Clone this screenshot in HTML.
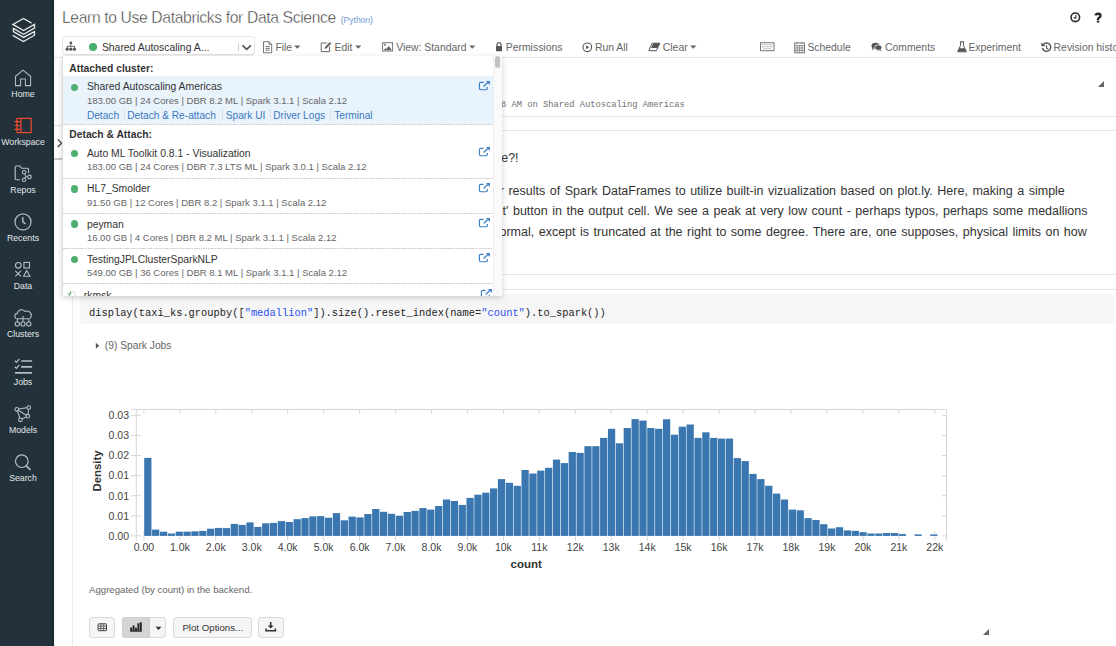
<!DOCTYPE html>
<html><head><meta charset="utf-8"><style>
html,body{margin:0;padding:0;}
body{width:1116px;height:646px;overflow:hidden;position:relative;background:#fff;font-family:'Liberation Sans', sans-serif;}
.t{position:absolute;white-space:nowrap;line-height:1;}
</style></head><body>
<div style="position:absolute;left:0.00px;top:0.00px;width:54.00px;height:646.00px;background:#22313a;"></div>
<div style="position:absolute;left:52.00px;top:0.00px;width:2.00px;height:646.00px;background:#1c2a32;"></div>
<div style="position:absolute;left:54.00px;top:0.00px;width:1.00px;height:646.00px;background:#f4f4f4;"></div>
<svg style="position:absolute;left:0;top:0" width="54" height="50"><path d="M31.5,23.1 L23.5,18.4 L12.9,24.4 L23.5,30.5 L34.5,24.4 L34.5,28 L23.5,34.3 L13.4,28.4 L13.4,31.6 L23.5,37.4 L34.5,31.6 L34.5,35.2 L23.5,41.5 L12.7,35.4" fill="none" stroke="#e8e8e8" stroke-width="1.3" stroke-linejoin="miter"/></svg>
<svg style="position:absolute;left:0;top:0" width="54" height="646"><path d="M15.5,85.6 V76.3 L23,70.2 L30.6,76.3 V85.6 H25.4 V78.9 H20.6 V85.6 Z" fill="none" stroke="#b5bec6" stroke-width="1.05"/><rect x="16.9" y="118.3" width="14.3" height="14.4" rx="0.6" fill="none" stroke="#e8492f" stroke-width="1.25"/><line x1="21" y1="118.3" x2="21" y2="132.7" stroke="#e8492f" stroke-width="1.2"/><path d="M14.5,121.7 H21 M14.5,125.5 H21 M14.5,129.3 H21" stroke="#e8492f" stroke-width="1.2"/><circle cx="17.2" cy="121.7" r="1.1" fill="#e8492f"/><circle cx="17.2" cy="125.5" r="1.1" fill="#e8492f"/><circle cx="17.2" cy="129.3" r="1.1" fill="#e8492f"/><path d="M19.9,179.7 H16.5 Q15.2,179.7 15.2,178.4 V167.3 Q15.2,166 16.5,166 H19.8 L21.6,168.2 H27.2 Q28.5,168.2 28.5,169.5 V173.1" fill="none" stroke="#b5bec6" stroke-width="1.15"/><circle cx="24.1" cy="172.3" r="1.75" fill="none" stroke="#b5bec6" stroke-width="1.1"/><circle cx="24.1" cy="179.8" r="1.75" fill="none" stroke="#b5bec6" stroke-width="1.1"/><circle cx="29.5" cy="176.9" r="1.75" fill="none" stroke="#b5bec6" stroke-width="1.1"/><path d="M24.7,173.9 L25.9,176.6 L24.8,178.2 M25.9,176.6 L27.8,176.8" fill="none" stroke="#b5bec6" stroke-width="1.1"/><circle cx="23" cy="221.9" r="8" fill="none" stroke="#b5bec6" stroke-width="1.2"/><path d="M22.8,217 V221.8 L25.6,224" fill="none" stroke="#b5bec6" stroke-width="1.4"/><circle cx="18.3" cy="265.3" r="2.8" fill="none" stroke="#b5bec6" stroke-width="1.1"/><rect x="23.9" y="262.4" width="5.6" height="5.6" fill="none" stroke="#b5bec6" stroke-width="1.1"/><path d="M15.3,270.8 L21,276.4 M21,270.8 L15.3,276.4 M26.7,270.6 L23.6,276.2 H29.9 Z" fill="none" stroke="#b5bec6" stroke-width="1.1"/><path d="M16.4,318.6 C14.3,318.2 13.9,314 17.3,313.4 C18,309.6 22.6,308.4 25,311.4 C28.2,310.2 32,312.6 31.2,316.2 C31,317.6 30.4,318.3 29.6,318.6" fill="none" stroke="#b5bec6" stroke-width="1.1"/><path d="M23,316 V321.6 M17.3,321.7 V318.8 H28.8 V321.7" fill="none" stroke="#b5bec6" stroke-width="1.1"/><circle cx="17.3" cy="323.9" r="2.1" fill="none" stroke="#b5bec6" stroke-width="1.1"/><circle cx="23" cy="323.9" r="2.1" fill="none" stroke="#b5bec6" stroke-width="1.1"/><circle cx="28.8" cy="323.9" r="2.1" fill="none" stroke="#b5bec6" stroke-width="1.1"/><path d="M14.8,360.8 L16.4,362.4 L19.4,358.9 M14.8,366.8 L16.4,368.4 L19.4,364.9" fill="none" stroke="#b5bec6" stroke-width="1.3"/><path d="M21.1,361 H32.1 M21.1,366.9 H32.1 M15,372.8 H32.1" fill="none" stroke="#b5bec6" stroke-width="1.7"/><path d="M16.8,409.3 L28.8,407.4 L27.8,416.2 L20.4,419.8 Z M16.8,409.3 L27.8,416.2" fill="none" stroke="#b5bec6" stroke-width="1.1"/><circle cx="16.8" cy="409.3" r="1.8" fill="#22313a" stroke="#b5bec6" stroke-width="1.1"/><circle cx="28.8" cy="407.5" r="1.8" fill="#22313a" stroke="#b5bec6" stroke-width="1.1"/><circle cx="27.8" cy="416.2" r="1.8" fill="#22313a" stroke="#b5bec6" stroke-width="1.1"/><circle cx="20.4" cy="419.8" r="1.8" fill="#22313a" stroke="#b5bec6" stroke-width="1.1"/><circle cx="21.8" cy="461.2" r="6.3" fill="none" stroke="#b5bec6" stroke-width="1.2"/><path d="M26.2,465.8 L30.5,469.8" stroke="#b5bec6" stroke-width="1.6"/></svg>
<div class="t" style="left:0;width:46px;text-align:center;top:89.89px;font-size:8.75px;color:#e4e7ea;">Home</div>
<div class="t" style="left:0;width:46px;text-align:center;top:137.89px;font-size:8.75px;color:#e4e7ea;">Workspace</div>
<div class="t" style="left:0;width:46px;text-align:center;top:185.89px;font-size:8.75px;color:#e4e7ea;">Repos</div>
<div class="t" style="left:0;width:46px;text-align:center;top:233.89px;font-size:8.75px;color:#e4e7ea;">Recents</div>
<div class="t" style="left:0;width:46px;text-align:center;top:281.89px;font-size:8.75px;color:#e4e7ea;">Data</div>
<div class="t" style="left:0;width:46px;text-align:center;top:329.89px;font-size:8.75px;color:#e4e7ea;">Clusters</div>
<div class="t" style="left:0;width:46px;text-align:center;top:377.89px;font-size:8.75px;color:#e4e7ea;">Jobs</div>
<div class="t" style="left:0;width:46px;text-align:center;top:425.89px;font-size:8.75px;color:#e4e7ea;">Models</div>
<div class="t" style="left:0;width:46px;text-align:center;top:473.89px;font-size:8.75px;color:#e4e7ea;">Search</div>
<svg style="position:absolute;left:54px;top:136px" width="10" height="14"><path d="M3.8,3.4 L7.6,7.2 L3.8,11" fill="none" stroke="#333" stroke-width="1.1"/></svg>
<div class="t" style="left:62.00px;top:10.21px;font-size:15.7px;color:#383838;font-weight:normal;font-family:'Liberation Sans', sans-serif;letter-spacing:-0.37px;-webkit-text-stroke:0.4px #fff;">Learn to Use Databricks for Data Science</div>
<div class="t" style="left:340.80px;top:15.82px;font-size:8.6px;color:#2c6cc0;font-weight:normal;font-family:'Liberation Sans', sans-serif;letter-spacing:-0.05px;-webkit-text-stroke:0.2px #fff;">(Python)</div>
<svg style="position:absolute;left:1068px;top:10px" width="40" height="16"><circle cx="7.3" cy="7.3" r="4.3" fill="none" stroke="#2a2a2a" stroke-width="1.6"/><path d="M7.9,4.9 V7.9 H5.6" fill="none" stroke="#2a2a2a" stroke-width="1.1"/></svg>
<svg style="position:absolute;left:1088px;top:8px" width="20" height="20"><path d="M7.5,7.4 C7.9,5.3 12.5,5 12.5,7.8 C12.5,9.6 10,9.8 10,11.6 V12.1" fill="none" stroke="#262626" stroke-width="2.3"/><rect x="8.8" y="12.6" width="2.5" height="1.9" fill="#262626"/></svg>
<div style="position:absolute;left:54.00px;top:56.90px;width:1062.00px;height:1.00px;background:#e6e6e6;"></div>
<div style="position:absolute;left:62.40px;top:36.20px;width:192.60px;height:19.20px;border:1px solid #e4e4e4;border-radius:4px;box-sizing:border-box;background:#fff;box-shadow:0 1px 1px rgba(0,0,0,0.06);"></div>
<svg style="position:absolute;left:62px;top:38px" width="20" height="16"><circle cx="8.85" cy="4.8" r="1.4" fill="#555"/><path d="M8.85,5 V8.3 M5.2,10.5 V8.3 H12.5 V10.5" fill="none" stroke="#555" stroke-width="0.9"/><circle cx="5.2" cy="11.2" r="1.6" fill="#555"/><circle cx="8.85" cy="11.2" r="1.6" fill="#555"/><circle cx="12.5" cy="11.2" r="1.6" fill="#555"/></svg>
<div style="position:absolute;left:89.20px;top:43.30px;width:7.80px;height:7.80px;border-radius:50%;background:#48ae6c;"></div>
<div class="t" style="left:101.90px;top:43.00px;font-size:10.4px;color:#333;font-weight:normal;font-family:'Liberation Sans', sans-serif;">Shared Autoscaling A...</div>
<div style="position:absolute;left:238.20px;top:43.30px;width:0.80px;height:7.40px;background:#d0d0d0;"></div>
<svg style="position:absolute;left:240px;top:42px" width="14" height="10"><path d="M2.4,3.3 L6.65,7.4 L10.9,3.3" fill="none" stroke="#555" stroke-width="1.75"/></svg>
<svg style="position:absolute;left:262px;top:41px" width="12" height="13"><path d="M1.5,0.7 H7 L9.7,3.4 V11.8 H1.5 Z M7,0.7 V3.4 H9.7 M3.3,5.6 H7.8 M3.3,7.4 H7.8 M3.3,9.2 H7.8" fill="none" stroke="#666" stroke-width="0.9"/></svg>
<div class="t" style="left:275.40px;top:42.60px;font-size:10.4px;color:#666;font-weight:normal;font-family:'Liberation Sans', sans-serif;">File</div>
<svg style="position:absolute;left:293.80px;top:44.5px" width="8" height="5"><path d="M0.2,0.4 H6.4 L3.3,3.8 Z" fill="#666"/></svg>
<svg style="position:absolute;left:320px;top:41px" width="13" height="12"><path d="M7,2 H1.2 V10.6 H9.6 V5.5" fill="none" stroke="#666" stroke-width="1"/><path d="M4.5,7.8 L5,5.9 L9.8,1.1 L11.3,2.6 L6.5,7.4 Z" fill="#666"/></svg>
<div class="t" style="left:334.50px;top:42.60px;font-size:10.4px;color:#666;font-weight:normal;font-family:'Liberation Sans', sans-serif;">Edit</div>
<svg style="position:absolute;left:355.30px;top:44.5px" width="8" height="5"><path d="M0.2,0.4 H6.4 L3.3,3.8 Z" fill="#666"/></svg>
<svg style="position:absolute;left:382px;top:42px" width="12" height="11"><rect x="0.6" y="0.7" width="10" height="8.3" fill="none" stroke="#777" stroke-width="1"/><path d="M1.6,8.3 L3.4,6.2 L4.4,7 L6.6,4 L8.8,6.6 L9.6,8.3 Z" fill="#666"/><circle cx="3" cy="2.7" r="0.95" fill="#666"/></svg>
<div class="t" style="left:396.20px;top:42.60px;font-size:10.4px;color:#666;font-weight:normal;font-family:'Liberation Sans', sans-serif;">View: Standard</div>
<svg style="position:absolute;left:469.30px;top:44.5px" width="8" height="5"><path d="M0.2,0.4 H6.4 L3.3,3.8 Z" fill="#666"/></svg>
<svg style="position:absolute;left:495px;top:41px" width="9" height="11"><path d="M2,5 V3.5 C2,1 6,1 6,3.5 V5" fill="none" stroke="#555" stroke-width="1.2"/><rect x="1" y="5" width="6" height="5.2" rx="0.5" fill="#555"/></svg>
<div class="t" style="left:505.80px;top:42.60px;font-size:10.4px;color:#666;font-weight:normal;font-family:'Liberation Sans', sans-serif;">Permissions</div>
<svg style="position:absolute;left:582px;top:42px" width="11" height="11"><circle cx="5.3" cy="5.3" r="4.3" fill="none" stroke="#555" stroke-width="1.1"/><path d="M4.1,3.3 L7.2,5.3 L4.1,7.3 Z" fill="#555"/></svg>
<div class="t" style="left:595.00px;top:42.60px;font-size:10.4px;color:#666;font-weight:normal;font-family:'Liberation Sans', sans-serif;">Run All</div>
<svg style="position:absolute;left:648px;top:42px" width="13" height="10"><path d="M0.7,8.7 L4.2,1.2 H11.8 L8.3,8.7 Z" fill="none" stroke="#555" stroke-width="1"/><path d="M5.4,1.2 H11.8 L9.5,6 H3.1 Z" fill="#555"/></svg>
<div class="t" style="left:662.80px;top:42.60px;font-size:10.4px;color:#666;font-weight:normal;font-family:'Liberation Sans', sans-serif;">Clear</div>
<svg style="position:absolute;left:689.80px;top:44.5px" width="8" height="5"><path d="M0.2,0.4 H6.4 L3.3,3.8 Z" fill="#666"/></svg>
<svg style="position:absolute;left:760px;top:42px" width="15" height="10"><rect x="0.5" y="0.7" width="13.5" height="8" fill="none" stroke="#777" stroke-width="1"/><path d="M2,2.7 H12.5 M2,4.7 H12.5 M3.5,6.7 H11" stroke="#999" stroke-width="0.9" stroke-dasharray="1,0.6"/></svg>
<svg style="position:absolute;left:794px;top:41px" width="12" height="13"><rect x="0.7" y="2" width="9.8" height="9.8" fill="none" stroke="#777" stroke-width="1"/><path d="M0.7,4.6 H10.5 M3,0.6 V3 M8,0.6 V3 M3.2,4.6 V11.8 M5.6,4.6 V11.8 M8,4.6 V11.8 M0.7,7 H10.5 M0.7,9.4 H10.5" stroke="#777" stroke-width="0.8"/></svg>
<div class="t" style="left:807.40px;top:42.60px;font-size:10.4px;color:#666;font-weight:normal;font-family:'Liberation Sans', sans-serif;">Schedule</div>
<svg style="position:absolute;left:871px;top:42px" width="12" height="10"><ellipse cx="4.5" cy="3.8" rx="4" ry="3" fill="#555"/><path d="M1.5,6 L0.8,8.3 L3.5,6.5 Z" fill="#555"/><ellipse cx="7.3" cy="5.6" rx="3.6" ry="2.8" fill="#555" stroke="#fff" stroke-width="0.8"/><path d="M9.5,7.5 L10.8,9.3 L7.8,8 Z" fill="#555"/></svg>
<div class="t" style="left:885.00px;top:42.60px;font-size:10.4px;color:#666;font-weight:normal;font-family:'Liberation Sans', sans-serif;">Comments</div>
<svg style="position:absolute;left:957px;top:41px" width="10" height="12"><path d="M3,0.8 H7 M3.6,0.8 V4.3 L0.6,10.8 H9.4 L6.4,4.3 V0.8" fill="none" stroke="#555" stroke-width="1"/><path d="M2.3,7.2 H7.7 L9.2,10.6 H0.8 Z" fill="#555"/></svg>
<div class="t" style="left:968.40px;top:42.60px;font-size:10.4px;color:#666;font-weight:normal;font-family:'Liberation Sans', sans-serif;">Experiment</div>
<svg style="position:absolute;left:1041px;top:42px" width="12" height="11"><path d="M2.2,2.6 A4.2,4.2 0 1 1 1.4,6" fill="none" stroke="#555" stroke-width="1.4"/><path d="M0.2,0.6 L0.6,4.6 L4.5,3.8 Z" fill="#555"/><path d="M5.5,3.2 V5.9 L7.4,7.2" fill="none" stroke="#555" stroke-width="1.1"/></svg>
<div class="t" style="left:1053.60px;top:42.60px;font-size:10.4px;color:#666;font-weight:normal;font-family:'Liberation Sans', sans-serif;">Revision history</div>
<div style="position:absolute;left:72.30px;top:57.00px;width:1.00px;height:589.00px;background:#eaecec;"></div>
<div style="position:absolute;left:73.00px;top:116.00px;width:1043.00px;height:1.00px;background:#e5e5e5;"></div>
<div style="position:absolute;left:73.00px;top:130.00px;width:1043.00px;height:1.00px;background:#e5e5e5;"></div>
<div style="position:absolute;left:54.00px;top:124.60px;width:9.00px;height:1.00px;background:#e0e0e0;"></div>
<div style="position:absolute;left:54.00px;top:158.10px;width:9.00px;height:1.80px;background:#c9c9c9;"></div>
<div class="t" style="left:196.44px;top:100.69px;font-size:8.76px;color:#707070;font-weight:normal;font-family:'Liberation Mono', monospace;white-space:pre;"> Command took 1.23 minutes -- by user at 6/1/2021, 10:15:18 AM on Shared Autoscaling Americas</div>
<svg style="position:absolute;left:1097px;top:80px" width="8" height="8"><path d="M1,7 L7,1 V7 Z" fill="#666"/></svg>
<div class="t" style="left:501.30px;top:152.10px;font-size:12.4px;color:#333;font-weight:normal;font-family:'Liberation Sans', sans-serif;">e?!</div>
<div class="t" style="left:499.75px;top:184.72px;font-size:12.5px;color:#333;font-weight:normal;font-family:'Liberation Sans', sans-serif;word-spacing:1.05px;">r results of Spark DataFrames to utilize built-in vizualization based on plot.ly. Here, making a simple</div>
<div class="t" style="left:502.55px;top:205.32px;font-size:12.5px;color:#333;font-weight:normal;font-family:'Liberation Sans', sans-serif;word-spacing:1.05px;">t' button in the output cell. We see a peak at very low count - perhaps typos, perhaps some medallions</div>
<div class="t" style="left:499.45px;top:225.52px;font-size:12.5px;color:#333;font-weight:normal;font-family:'Liberation Sans', sans-serif;word-spacing:1.05px;">ormal, except is truncated at the right to some degree. There are, one supposes, physical limits on how</div>
<div style="position:absolute;left:73.00px;top:274.00px;width:1043.00px;height:1.00px;background:#e5e5e5;"></div>
<div style="position:absolute;left:73.00px;top:288.50px;width:1043.00px;height:1.00px;background:#e5e5e5;"></div>
<div style="position:absolute;left:79.70px;top:294.40px;width:1034.70px;height:30.00px;background:#f6f6f6;border-radius:2px;"></div>
<div class="t" style="left:89.00px;top:308.14px;font-size:10.38px;color:#222;font-weight:normal;font-family:'Liberation Mono', monospace;white-space:pre;">display(taxi_ks.groupby([<span style="color:#2c50f5">"medallion"</span>]).size().reset_index(name=<span style="color:#2c50f5">"count"</span>).to_spark())</div>
<svg style="position:absolute;left:95px;top:342px" width="6" height="8"><path d="M0.8,0.7 L4.2,3.7 L0.8,6.7 Z" fill="#555"/></svg>
<div class="t" style="left:104.80px;top:341.31px;font-size:10.26px;color:#666;font-weight:normal;font-family:'Liberation Sans', sans-serif;">(9) Spark Jobs</div>
<div class="t" style="left:90px;width:39px;text-align:right;top:410.21px;font-size:10.5px;color:#444;">0.03</div>
<div class="t" style="left:90px;width:39px;text-align:right;top:430.29px;font-size:10.5px;color:#444;">0.03</div>
<div class="t" style="left:90px;width:39px;text-align:right;top:450.37px;font-size:10.5px;color:#444;">0.02</div>
<div class="t" style="left:90px;width:39px;text-align:right;top:470.45px;font-size:10.5px;color:#444;">0.01</div>
<div class="t" style="left:90px;width:39px;text-align:right;top:490.53px;font-size:10.5px;color:#444;">0.01</div>
<div class="t" style="left:90px;width:39px;text-align:right;top:510.61px;font-size:10.5px;color:#444;">0.01</div>
<div class="t" style="left:90px;width:39px;text-align:right;top:530.69px;font-size:10.5px;color:#444;">0.00</div>
<div class="t" style="left:118.90px;width:50px;text-align:center;top:541.91px;font-size:10.5px;color:#444;">0.00</div>
<div class="t" style="left:154.85px;width:50px;text-align:center;top:541.91px;font-size:10.5px;color:#444;">1.0k</div>
<div class="t" style="left:190.80px;width:50px;text-align:center;top:541.91px;font-size:10.5px;color:#444;">2.0k</div>
<div class="t" style="left:226.75px;width:50px;text-align:center;top:541.91px;font-size:10.5px;color:#444;">3.0k</div>
<div class="t" style="left:262.70px;width:50px;text-align:center;top:541.91px;font-size:10.5px;color:#444;">4.0k</div>
<div class="t" style="left:298.65px;width:50px;text-align:center;top:541.91px;font-size:10.5px;color:#444;">5.0k</div>
<div class="t" style="left:334.60px;width:50px;text-align:center;top:541.91px;font-size:10.5px;color:#444;">6.0k</div>
<div class="t" style="left:370.55px;width:50px;text-align:center;top:541.91px;font-size:10.5px;color:#444;">7.0k</div>
<div class="t" style="left:406.50px;width:50px;text-align:center;top:541.91px;font-size:10.5px;color:#444;">8.0k</div>
<div class="t" style="left:442.45px;width:50px;text-align:center;top:541.91px;font-size:10.5px;color:#444;">9.0k</div>
<div class="t" style="left:478.40px;width:50px;text-align:center;top:541.91px;font-size:10.5px;color:#444;">10k</div>
<div class="t" style="left:514.35px;width:50px;text-align:center;top:541.91px;font-size:10.5px;color:#444;">11k</div>
<div class="t" style="left:550.30px;width:50px;text-align:center;top:541.91px;font-size:10.5px;color:#444;">12k</div>
<div class="t" style="left:586.25px;width:50px;text-align:center;top:541.91px;font-size:10.5px;color:#444;">13k</div>
<div class="t" style="left:622.20px;width:50px;text-align:center;top:541.91px;font-size:10.5px;color:#444;">14k</div>
<div class="t" style="left:658.15px;width:50px;text-align:center;top:541.91px;font-size:10.5px;color:#444;">15k</div>
<div class="t" style="left:694.10px;width:50px;text-align:center;top:541.91px;font-size:10.5px;color:#444;">16k</div>
<div class="t" style="left:730.05px;width:50px;text-align:center;top:541.91px;font-size:10.5px;color:#444;">17k</div>
<div class="t" style="left:766.00px;width:50px;text-align:center;top:541.91px;font-size:10.5px;color:#444;">18k</div>
<div class="t" style="left:801.95px;width:50px;text-align:center;top:541.91px;font-size:10.5px;color:#444;">19k</div>
<div class="t" style="left:837.90px;width:50px;text-align:center;top:541.91px;font-size:10.5px;color:#444;">20k</div>
<div class="t" style="left:873.85px;width:50px;text-align:center;top:541.91px;font-size:10.5px;color:#444;">21k</div>
<div class="t" style="left:909.80px;width:50px;text-align:center;top:541.91px;font-size:10.5px;color:#444;">22k</div>
<svg style="position:absolute;left:0;top:0" width="1116" height="646"><path d="M131,409.4 H946.4 V540.5 M136.3,409.4 V540.8" fill="none" stroke="#d6d6d6" stroke-width="1"/><path d="M131.2,415.40 H140.8 M942,415.40 H946.4" stroke="#d6d6d6" stroke-width="1"/><path d="M131.2,435.48 H140.8 M942,435.48 H946.4" stroke="#d6d6d6" stroke-width="1"/><path d="M131.2,455.56 H140.8 M942,455.56 H946.4" stroke="#d6d6d6" stroke-width="1"/><path d="M131.2,475.64 H140.8 M942,475.64 H946.4" stroke="#d6d6d6" stroke-width="1"/><path d="M131.2,495.72 H140.8 M942,495.72 H946.4" stroke="#d6d6d6" stroke-width="1"/><path d="M131.2,515.80 H140.8 M942,515.80 H946.4" stroke="#d6d6d6" stroke-width="1"/><path d="M131.2,535.88 H140.8 M942,535.88 H946.4" stroke="#d6d6d6" stroke-width="1"/><path d="M143.90,409.4 V413.6 M143.90,531.5 V540.8" stroke="#d6d6d6" stroke-width="1"/><path d="M179.85,409.4 V413.6 M179.85,531.5 V540.8" stroke="#d6d6d6" stroke-width="1"/><path d="M215.80,409.4 V413.6 M215.80,531.5 V540.8" stroke="#d6d6d6" stroke-width="1"/><path d="M251.75,409.4 V413.6 M251.75,531.5 V540.8" stroke="#d6d6d6" stroke-width="1"/><path d="M287.70,409.4 V413.6 M287.70,531.5 V540.8" stroke="#d6d6d6" stroke-width="1"/><path d="M323.65,409.4 V413.6 M323.65,531.5 V540.8" stroke="#d6d6d6" stroke-width="1"/><path d="M359.60,409.4 V413.6 M359.60,531.5 V540.8" stroke="#d6d6d6" stroke-width="1"/><path d="M395.55,409.4 V413.6 M395.55,531.5 V540.8" stroke="#d6d6d6" stroke-width="1"/><path d="M431.50,409.4 V413.6 M431.50,531.5 V540.8" stroke="#d6d6d6" stroke-width="1"/><path d="M467.45,409.4 V413.6 M467.45,531.5 V540.8" stroke="#d6d6d6" stroke-width="1"/><path d="M503.40,409.4 V413.6 M503.40,531.5 V540.8" stroke="#d6d6d6" stroke-width="1"/><path d="M539.35,409.4 V413.6 M539.35,531.5 V540.8" stroke="#d6d6d6" stroke-width="1"/><path d="M575.30,409.4 V413.6 M575.30,531.5 V540.8" stroke="#d6d6d6" stroke-width="1"/><path d="M611.25,409.4 V413.6 M611.25,531.5 V540.8" stroke="#d6d6d6" stroke-width="1"/><path d="M647.20,409.4 V413.6 M647.20,531.5 V540.8" stroke="#d6d6d6" stroke-width="1"/><path d="M683.15,409.4 V413.6 M683.15,531.5 V540.8" stroke="#d6d6d6" stroke-width="1"/><path d="M719.10,409.4 V413.6 M719.10,531.5 V540.8" stroke="#d6d6d6" stroke-width="1"/><path d="M755.05,409.4 V413.6 M755.05,531.5 V540.8" stroke="#d6d6d6" stroke-width="1"/><path d="M791.00,409.4 V413.6 M791.00,531.5 V540.8" stroke="#d6d6d6" stroke-width="1"/><path d="M826.95,409.4 V413.6 M826.95,531.5 V540.8" stroke="#d6d6d6" stroke-width="1"/><path d="M862.90,409.4 V413.6 M862.90,531.5 V540.8" stroke="#d6d6d6" stroke-width="1"/><path d="M898.85,409.4 V413.6 M898.85,531.5 V540.8" stroke="#d6d6d6" stroke-width="1"/><path d="M934.80,409.4 V413.6 M934.80,531.5 V540.8" stroke="#d6d6d6" stroke-width="1"/><rect x="144.20" y="457.90" width="7.26" height="78.00" fill="#3a76af"/><rect x="152.06" y="529.60" width="7.26" height="6.30" fill="#3a76af"/><rect x="159.92" y="531.70" width="7.26" height="4.20" fill="#3a76af"/><rect x="167.78" y="533.50" width="7.26" height="2.40" fill="#3a76af"/><rect x="175.64" y="531.70" width="7.26" height="4.20" fill="#3a76af"/><rect x="183.50" y="531.70" width="7.26" height="4.20" fill="#3a76af"/><rect x="191.36" y="531.30" width="7.26" height="4.60" fill="#3a76af"/><rect x="199.22" y="530.90" width="7.26" height="5.00" fill="#3a76af"/><rect x="207.08" y="528.70" width="7.26" height="7.20" fill="#3a76af"/><rect x="214.94" y="527.90" width="7.26" height="8.00" fill="#3a76af"/><rect x="222.80" y="528.10" width="7.26" height="7.80" fill="#3a76af"/><rect x="230.66" y="523.90" width="7.26" height="12.00" fill="#3a76af"/><rect x="238.52" y="524.90" width="7.26" height="11.00" fill="#3a76af"/><rect x="246.38" y="522.40" width="7.26" height="13.50" fill="#3a76af"/><rect x="254.24" y="526.90" width="7.26" height="9.00" fill="#3a76af"/><rect x="262.10" y="523.30" width="7.26" height="12.60" fill="#3a76af"/><rect x="269.96" y="522.90" width="7.26" height="13.00" fill="#3a76af"/><rect x="277.82" y="521.10" width="7.26" height="14.80" fill="#3a76af"/><rect x="285.68" y="522.00" width="7.26" height="13.90" fill="#3a76af"/><rect x="293.54" y="519.20" width="7.26" height="16.70" fill="#3a76af"/><rect x="301.40" y="518.10" width="7.26" height="17.80" fill="#3a76af"/><rect x="309.26" y="516.40" width="7.26" height="19.50" fill="#3a76af"/><rect x="317.12" y="516.10" width="7.26" height="19.80" fill="#3a76af"/><rect x="324.98" y="517.70" width="7.26" height="18.20" fill="#3a76af"/><rect x="332.84" y="513.10" width="7.26" height="22.80" fill="#3a76af"/><rect x="340.70" y="520.30" width="7.26" height="15.60" fill="#3a76af"/><rect x="348.56" y="516.60" width="7.26" height="19.30" fill="#3a76af"/><rect x="356.42" y="517.40" width="7.26" height="18.50" fill="#3a76af"/><rect x="364.28" y="514.00" width="7.26" height="21.90" fill="#3a76af"/><rect x="372.14" y="509.00" width="7.26" height="26.90" fill="#3a76af"/><rect x="380.00" y="511.80" width="7.26" height="24.10" fill="#3a76af"/><rect x="387.86" y="513.80" width="7.26" height="22.10" fill="#3a76af"/><rect x="395.72" y="515.70" width="7.26" height="20.20" fill="#3a76af"/><rect x="403.58" y="512.00" width="7.26" height="23.90" fill="#3a76af"/><rect x="411.44" y="510.90" width="7.26" height="25.00" fill="#3a76af"/><rect x="419.30" y="508.10" width="7.26" height="27.80" fill="#3a76af"/><rect x="427.16" y="509.60" width="7.26" height="26.30" fill="#3a76af"/><rect x="435.02" y="506.00" width="7.26" height="29.90" fill="#3a76af"/><rect x="442.88" y="499.50" width="7.26" height="36.40" fill="#3a76af"/><rect x="450.74" y="501.00" width="7.26" height="34.90" fill="#3a76af"/><rect x="458.60" y="504.90" width="7.26" height="31.00" fill="#3a76af"/><rect x="466.46" y="497.90" width="7.26" height="38.00" fill="#3a76af"/><rect x="474.32" y="494.70" width="7.26" height="41.20" fill="#3a76af"/><rect x="482.18" y="492.70" width="7.26" height="43.20" fill="#3a76af"/><rect x="490.04" y="488.40" width="7.26" height="47.50" fill="#3a76af"/><rect x="497.90" y="479.10" width="7.26" height="56.80" fill="#3a76af"/><rect x="505.76" y="482.80" width="7.26" height="53.10" fill="#3a76af"/><rect x="513.62" y="485.80" width="7.26" height="50.10" fill="#3a76af"/><rect x="521.48" y="470.00" width="7.26" height="65.90" fill="#3a76af"/><rect x="529.34" y="473.50" width="7.26" height="62.40" fill="#3a76af"/><rect x="537.20" y="470.60" width="7.26" height="65.30" fill="#3a76af"/><rect x="545.06" y="467.80" width="7.26" height="68.10" fill="#3a76af"/><rect x="552.92" y="459.60" width="7.26" height="76.30" fill="#3a76af"/><rect x="560.78" y="463.10" width="7.26" height="72.80" fill="#3a76af"/><rect x="568.64" y="452.00" width="7.26" height="83.90" fill="#3a76af"/><rect x="576.50" y="452.90" width="7.26" height="83.00" fill="#3a76af"/><rect x="584.36" y="446.20" width="7.26" height="89.70" fill="#3a76af"/><rect x="592.22" y="446.20" width="7.26" height="89.70" fill="#3a76af"/><rect x="600.08" y="437.90" width="7.26" height="98.00" fill="#3a76af"/><rect x="607.94" y="428.80" width="7.26" height="107.10" fill="#3a76af"/><rect x="615.80" y="443.30" width="7.26" height="92.60" fill="#3a76af"/><rect x="623.66" y="428.00" width="7.26" height="107.90" fill="#3a76af"/><rect x="631.52" y="419.10" width="7.26" height="116.80" fill="#3a76af"/><rect x="639.38" y="420.60" width="7.26" height="115.30" fill="#3a76af"/><rect x="647.24" y="428.00" width="7.26" height="107.90" fill="#3a76af"/><rect x="655.10" y="428.80" width="7.26" height="107.10" fill="#3a76af"/><rect x="662.96" y="419.30" width="7.26" height="116.60" fill="#3a76af"/><rect x="670.82" y="434.70" width="7.26" height="101.20" fill="#3a76af"/><rect x="678.68" y="426.70" width="7.26" height="109.20" fill="#3a76af"/><rect x="686.54" y="424.50" width="7.26" height="111.40" fill="#3a76af"/><rect x="694.40" y="437.90" width="7.26" height="98.00" fill="#3a76af"/><rect x="702.26" y="432.30" width="7.26" height="103.60" fill="#3a76af"/><rect x="710.12" y="437.90" width="7.26" height="98.00" fill="#3a76af"/><rect x="717.98" y="438.60" width="7.26" height="97.30" fill="#3a76af"/><rect x="725.84" y="438.60" width="7.26" height="97.30" fill="#3a76af"/><rect x="733.70" y="458.10" width="7.26" height="77.80" fill="#3a76af"/><rect x="741.56" y="461.10" width="7.26" height="74.80" fill="#3a76af"/><rect x="749.42" y="473.90" width="7.26" height="62.00" fill="#3a76af"/><rect x="757.28" y="479.10" width="7.26" height="56.80" fill="#3a76af"/><rect x="765.14" y="485.80" width="7.26" height="50.10" fill="#3a76af"/><rect x="773.00" y="493.60" width="7.26" height="42.30" fill="#3a76af"/><rect x="780.86" y="499.50" width="7.26" height="36.40" fill="#3a76af"/><rect x="788.72" y="509.60" width="7.26" height="26.30" fill="#3a76af"/><rect x="796.58" y="510.30" width="7.26" height="25.60" fill="#3a76af"/><rect x="804.44" y="518.10" width="7.26" height="17.80" fill="#3a76af"/><rect x="812.30" y="520.00" width="7.26" height="15.90" fill="#3a76af"/><rect x="820.16" y="524.20" width="7.26" height="11.70" fill="#3a76af"/><rect x="828.02" y="528.50" width="7.26" height="7.40" fill="#3a76af"/><rect x="835.88" y="527.20" width="7.26" height="8.70" fill="#3a76af"/><rect x="843.74" y="530.40" width="7.26" height="5.50" fill="#3a76af"/><rect x="851.60" y="530.90" width="7.26" height="5.00" fill="#3a76af"/><rect x="859.46" y="532.20" width="7.26" height="3.70" fill="#3a76af"/><rect x="867.32" y="533.50" width="7.26" height="2.40" fill="#3a76af"/><rect x="875.18" y="533.50" width="7.26" height="2.40" fill="#3a76af"/><rect x="883.04" y="533.00" width="7.26" height="2.90" fill="#3a76af"/><rect x="890.90" y="533.00" width="7.26" height="2.90" fill="#3a76af"/><rect x="898.76" y="534.10" width="7.26" height="1.80" fill="#3a76af"/><rect x="914.48" y="534.40" width="7.26" height="1.50" fill="#3a76af"/><rect x="930.20" y="534.40" width="7.26" height="1.50" fill="#3a76af"/></svg>
<div class="t" style="left:510.50px;top:558.67px;font-size:11.5px;color:#333;font-weight:bold;font-family:'Liberation Sans', sans-serif;">count</div>
<div class="t" style="left:67.00px;top:464.30px;width:60px;height:14px;line-height:14px;text-align:center;font-size:11.4px;font-weight:bold;color:#333;transform:rotate(-90deg);">Density</div>
<div class="t" style="left:89.00px;top:585.04px;font-size:9.64px;color:#666;font-weight:normal;font-family:'Liberation Sans', sans-serif;">Aggregated (by count) in the backend.</div>
<div style="position:absolute;left:89.00px;top:617.10px;width:25.90px;height:20.50px;border:1px solid #d9d9d9;border-radius:3px;box-sizing:border-box;background:#f5f5f5;"></div>
<svg style="position:absolute;left:97px;top:623px" width="12" height="10"><rect x="1.1" y="0.8" width="8.4" height="6.9" rx="0.6" fill="none" stroke="#444" stroke-width="1"/><path d="M1.1,3.1 H9.5 M1.1,5.4 H9.5 M3.9,0.8 V7.7 M6.7,0.8 V7.7" stroke="#444" stroke-width="0.8"/></svg>
<div style="position:absolute;left:122.20px;top:617.10px;width:44.30px;height:20.50px;border:1px solid #d9d9d9;border-radius:3px;box-sizing:border-box;background:#f5f5f5;"></div>
<div style="position:absolute;left:122.20px;top:617.10px;width:28.30px;height:20.50px;border:1px solid #cfcfcf;border-radius:3px 0 0 3px;box-sizing:border-box;background:#d4d4d4;"></div>
<svg style="position:absolute;left:130px;top:621px" width="13" height="11"><path d="M1.2,10 V6.5 M3.6,10 V4.5 M6,10 V6.8 M8.4,10 V2.2 M10.8,10 V1.2" stroke="#222" stroke-width="1.9"/><path d="M0.2,10.2 H11.8" stroke="#222" stroke-width="1"/></svg>
<svg style="position:absolute;left:154.5px;top:625.6px" width="8" height="5"><path d="M0.5,0.8 H6.5 L3.5,4 Z" fill="#333"/></svg>
<div style="position:absolute;left:173.40px;top:617.10px;width:78.40px;height:20.50px;border:1px solid #d9d9d9;border-radius:3px;box-sizing:border-box;background:#f5f5f5;"></div>
<div class="t" style="left:182.40px;top:623.41px;font-size:9.68px;color:#333;font-weight:normal;font-family:'Liberation Sans', sans-serif;">Plot Options...</div>
<div style="position:absolute;left:258.30px;top:617.10px;width:25.40px;height:20.50px;border:1px solid #d9d9d9;border-radius:3px;box-sizing:border-box;background:#f5f5f5;"></div>
<svg style="position:absolute;left:265px;top:621px" width="12" height="12"><path d="M5.7,1 V6.5" stroke="#333" stroke-width="1.6"/><path d="M2.7,4.5 L5.7,7.5 L8.7,4.5 Z" fill="#333"/><path d="M1,7.5 V9.8 H10.4 V7.5" fill="none" stroke="#333" stroke-width="1.5"/></svg>
<svg style="position:absolute;left:982px;top:628px" width="8" height="8"><path d="M1,7 L7,1 V7 Z" fill="#666"/></svg>
<div style="position:absolute;left:62.1px;top:55.8px;width:440px;height:240.2px;background:#fff;box-shadow:0 2px 6px rgba(0,0,0,0.18);border-left:1px solid #ddd;box-sizing:border-box;overflow:hidden;"></div>
<div style="position:absolute;left:63.20px;top:76.10px;width:430.00px;height:48.20px;background:#e9f3fc;"></div>
<div style="position:absolute;left:492.60px;top:55.80px;width:9.50px;height:240.20px;background:#fafafa;border-left:1px solid #f0f0f0;box-sizing:border-box;"></div>
<div style="position:absolute;left:495.10px;top:56.40px;width:5.40px;height:11.30px;background:#c2c2c2;border-radius:2.7px;"></div>
<div class="t" style="left:69.30px;top:64.48px;font-size:10.3px;color:#333;font-weight:bold;font-family:'Liberation Sans', sans-serif;">Attached cluster:</div>
<div style="position:absolute;left:70.90px;top:83.50px;width:7.60px;height:7.60px;border-radius:50%;background:#4fae70;"></div>
<div class="t" style="left:86.90px;top:82.11px;font-size:10.38px;color:#333;font-weight:normal;font-family:'Liberation Sans', sans-serif;">Shared Autoscaling Americas</div>
<div class="t" style="left:86.90px;top:95.94px;font-size:9.52px;color:#666;font-weight:normal;font-family:'Liberation Sans', sans-serif;">183.00 GB | 24 Cores | DBR 8.2 ML | Spark 3.1.1 | Scala 2.12</div>
<div class="t" style="left:86.90px;top:110.60px;font-size:10.16px;color:#3b78c0;font-weight:normal;font-family:'Liberation Sans', sans-serif;">Detach</div>
<div class="t" style="left:127.20px;top:110.60px;font-size:10.16px;color:#3b78c0;font-weight:normal;font-family:'Liberation Sans', sans-serif;">Detach &amp; Re-attach</div>
<div class="t" style="left:225.80px;top:110.60px;font-size:10.16px;color:#3b78c0;font-weight:normal;font-family:'Liberation Sans', sans-serif;">Spark UI</div>
<div class="t" style="left:273.20px;top:110.60px;font-size:10.16px;color:#3b78c0;font-weight:normal;font-family:'Liberation Sans', sans-serif;">Driver Logs</div>
<div class="t" style="left:334.20px;top:110.60px;font-size:10.16px;color:#3b78c0;font-weight:normal;font-family:'Liberation Sans', sans-serif;">Terminal</div>
<div style="position:absolute;left:123.60px;top:107.90px;width:0.80px;height:12.50px;background:#dbe3ea;"></div>
<div style="position:absolute;left:221.80px;top:107.90px;width:0.80px;height:12.50px;background:#dbe3ea;"></div>
<div style="position:absolute;left:269.70px;top:107.90px;width:0.80px;height:12.50px;background:#dbe3ea;"></div>
<div style="position:absolute;left:329.70px;top:107.90px;width:0.80px;height:12.50px;background:#dbe3ea;"></div>
<svg style="position:absolute;left:478.00px;top:80.00px" width="12" height="11"><path d="M5.6,2.4 H2.9 C1.9,2.4 1.4,2.9 1.4,3.9 V8.3 C1.4,9.3 1.9,9.7 2.9,9.7 H7.9 C8.9,9.7 9.4,9.3 9.4,8.3 V7.1" fill="none" stroke="#3d7fc6" stroke-width="1.15"/><path d="M5.6,6.4 L9.8,2.6" fill="none" stroke="#3d7fc6" stroke-width="1.3"/><path d="M8,1.1 H11.9 V4.9 Z" fill="#3d7fc6"/></svg>
<div style="position:absolute;left:63.20px;top:124.00px;width:430.00px;height:1.00px;height:1px;background:repeating-linear-gradient(90deg,#d4d4d4 0 1.5px,#ececec 1.5px 2.3px);"></div>
<div class="t" style="left:69.30px;top:130.28px;font-size:10.3px;color:#333;font-weight:bold;font-family:'Liberation Sans', sans-serif;">Detach &amp; Attach:</div>
<div style="position:absolute;left:70.80px;top:149.70px;width:7.60px;height:7.60px;border-radius:50%;background:#4fae70;"></div>
<div class="t" style="left:86.90px;top:149.11px;font-size:10.38px;color:#333;font-weight:normal;font-family:'Liberation Sans', sans-serif;">Auto ML Toolkit 0.8.1 - Visualization</div>
<div class="t" style="left:86.90px;top:162.24px;font-size:9.52px;color:#666;font-weight:normal;font-family:'Liberation Sans', sans-serif;">183.00 GB | 24 Cores | DBR 7.3 LTS ML | Spark 3.0.1 | Scala 2.12</div>
<svg style="position:absolute;left:478.00px;top:146.30px" width="12" height="11"><path d="M5.6,2.4 H2.9 C1.9,2.4 1.4,2.9 1.4,3.9 V8.3 C1.4,9.3 1.9,9.7 2.9,9.7 H7.9 C8.9,9.7 9.4,9.3 9.4,8.3 V7.1" fill="none" stroke="#3d7fc6" stroke-width="1.15"/><path d="M5.6,6.4 L9.8,2.6" fill="none" stroke="#3d7fc6" stroke-width="1.3"/><path d="M8,1.1 H11.9 V4.9 Z" fill="#3d7fc6"/></svg>
<div style="position:absolute;left:63.20px;top:178.00px;width:430.00px;height:1.00px;height:1px;background:repeating-linear-gradient(90deg,#d4d4d4 0 1.5px,#ececec 1.5px 2.3px);"></div>
<div style="position:absolute;left:70.80px;top:185.05px;width:7.60px;height:7.60px;border-radius:50%;background:#4fae70;"></div>
<div class="t" style="left:86.90px;top:184.46px;font-size:10.38px;color:#333;font-weight:normal;font-family:'Liberation Sans', sans-serif;">HL7_Smolder</div>
<div class="t" style="left:86.90px;top:197.59px;font-size:9.52px;color:#666;font-weight:normal;font-family:'Liberation Sans', sans-serif;">91.50 GB | 12 Cores | DBR 8.2 | Spark 3.1.1 | Scala 2.12</div>
<svg style="position:absolute;left:478.00px;top:181.65px" width="12" height="11"><path d="M5.6,2.4 H2.9 C1.9,2.4 1.4,2.9 1.4,3.9 V8.3 C1.4,9.3 1.9,9.7 2.9,9.7 H7.9 C8.9,9.7 9.4,9.3 9.4,8.3 V7.1" fill="none" stroke="#3d7fc6" stroke-width="1.15"/><path d="M5.6,6.4 L9.8,2.6" fill="none" stroke="#3d7fc6" stroke-width="1.3"/><path d="M8,1.1 H11.9 V4.9 Z" fill="#3d7fc6"/></svg>
<div style="position:absolute;left:63.20px;top:213.05px;width:430.00px;height:1.00px;height:1px;background:repeating-linear-gradient(90deg,#d4d4d4 0 1.5px,#ececec 1.5px 2.3px);"></div>
<div style="position:absolute;left:70.80px;top:220.40px;width:7.60px;height:7.60px;border-radius:50%;background:#4fae70;"></div>
<div class="t" style="left:86.90px;top:219.81px;font-size:10.38px;color:#333;font-weight:normal;font-family:'Liberation Sans', sans-serif;">peyman</div>
<div class="t" style="left:86.90px;top:232.94px;font-size:9.52px;color:#666;font-weight:normal;font-family:'Liberation Sans', sans-serif;">16.00 GB | 4 Cores | DBR 8.2 ML | Spark 3.1.1 | Scala 2.12</div>
<svg style="position:absolute;left:478.00px;top:217.00px" width="12" height="11"><path d="M5.6,2.4 H2.9 C1.9,2.4 1.4,2.9 1.4,3.9 V8.3 C1.4,9.3 1.9,9.7 2.9,9.7 H7.9 C8.9,9.7 9.4,9.3 9.4,8.3 V7.1" fill="none" stroke="#3d7fc6" stroke-width="1.15"/><path d="M5.6,6.4 L9.8,2.6" fill="none" stroke="#3d7fc6" stroke-width="1.3"/><path d="M8,1.1 H11.9 V4.9 Z" fill="#3d7fc6"/></svg>
<div style="position:absolute;left:63.20px;top:248.10px;width:430.00px;height:1.00px;height:1px;background:repeating-linear-gradient(90deg,#d4d4d4 0 1.5px,#ececec 1.5px 2.3px);"></div>
<div style="position:absolute;left:70.80px;top:255.75px;width:7.60px;height:7.60px;border-radius:50%;background:#4fae70;"></div>
<div class="t" style="left:86.90px;top:255.16px;font-size:10.38px;color:#333;font-weight:normal;font-family:'Liberation Sans', sans-serif;">TestingJPLClusterSparkNLP</div>
<div class="t" style="left:86.90px;top:268.29px;font-size:9.52px;color:#666;font-weight:normal;font-family:'Liberation Sans', sans-serif;">549.00 GB | 36 Cores | DBR 8.1 ML | Spark 3.1.1 | Scala 2.12</div>
<svg style="position:absolute;left:478.00px;top:252.35px" width="12" height="11"><path d="M5.6,2.4 H2.9 C1.9,2.4 1.4,2.9 1.4,3.9 V8.3 C1.4,9.3 1.9,9.7 2.9,9.7 H7.9 C8.9,9.7 9.4,9.3 9.4,8.3 V7.1" fill="none" stroke="#3d7fc6" stroke-width="1.15"/><path d="M5.6,6.4 L9.8,2.6" fill="none" stroke="#3d7fc6" stroke-width="1.3"/><path d="M8,1.1 H11.9 V4.9 Z" fill="#3d7fc6"/></svg>
<div style="position:absolute;left:63.20px;top:283.15px;width:430.00px;height:1.00px;height:1px;background:repeating-linear-gradient(90deg,#d4d4d4 0 1.5px,#ececec 1.5px 2.3px);"></div>
<div style="position:absolute;left:63px;top:284px;width:430px;height:12px;overflow:hidden;"><div class="t" style="left:20.8px;top:6.81px;font-size:10.38px;color:#333;">rkmsk</div><svg style="position:absolute;left:4px;top:6px" width="10" height="10"><circle cx="5" cy="5" r="3.6" fill="none" stroke="#cfd8cf" stroke-width="1.4" stroke-dasharray="1.5,1.3"/><path d="M2,5.5 L4,2.2" stroke="#4fae70" stroke-width="1.4"/></svg><svg style="position:absolute;left:417px;top:4px" width="12" height="11"><path d="M5.6,2.4 H2.9 C1.9,2.4 1.4,2.9 1.4,3.9 V8.3 C1.4,9.3 1.9,9.7 2.9,9.7 H7.9 C8.9,9.7 9.4,9.3 9.4,8.3 V7.1" fill="none" stroke="#3d7fc6" stroke-width="1.15"/><path d="M5.6,6.4 L9.8,2.6" fill="none" stroke="#3d7fc6" stroke-width="1.3"/><path d="M8,1.1 H11.9 V4.9 Z" fill="#3d7fc6"/></svg></div>
</body></html>
